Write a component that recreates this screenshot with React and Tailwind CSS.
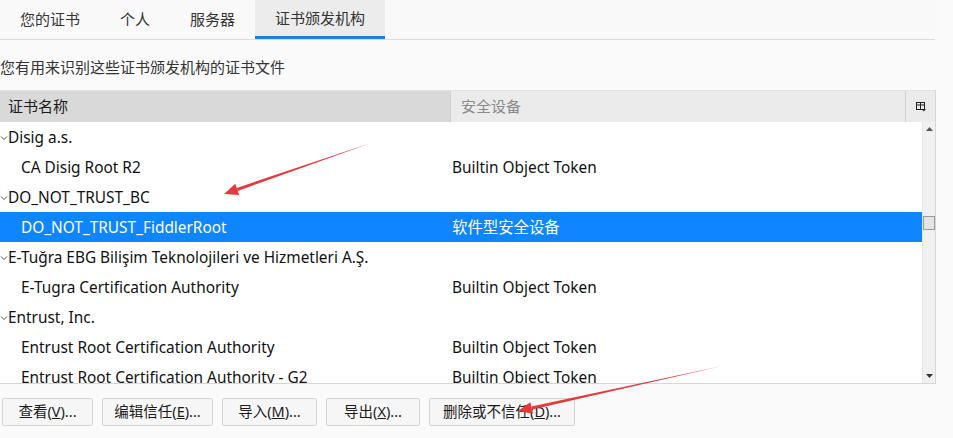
import React from 'react'

const FONT = { fontFamily: '"Noto Sans", "Noto Sans CJK SC", sans-serif' }

const rows = [
  { group: true, name: 'Disig a.s.' },
  { name: 'CA Disig Root R2', device: 'Builtin Object Token' },
  { group: true, name: 'DO_NOT_TRUST_BC' },
  { name: 'DO_NOT_TRUST_FiddlerRoot', device: '软件型安全设备', selected: true },
  { group: true, name: 'E-Tuğra EBG Bilişim Teknolojileri ve Hizmetleri A.Ş.' },
  { name: 'E-Tugra Certification Authority', device: 'Builtin Object Token' },
  { group: true, name: 'Entrust, Inc.' },
  { name: 'Entrust Root Certification Authority', device: 'Builtin Object Token' },
  { name: 'Entrust Root Certification Authority - G2', device: 'Builtin Object Token' },
]

function Chevron() {
  return (
    <svg width="8" height="8" viewBox="0 0 8 8" className="shrink-0">
      <path d="M1 2.5 L4 5.5 L7 2.5" fill="none" stroke="#555" strokeWidth="1" />
    </svg>
  )
}

function Row({ row }) {
  const sel = row.selected
  return (
    <div className={`flex h-[30px] items-center pt-[2px] text-[15.4px] ${sel ? 'bg-[#0f86ff] text-white' : 'text-[#111]'}`}>
      <div className="flex w-[452px] items-center whitespace-nowrap">
        {row.group ? (
          <>
            <Chevron />
            <span>{row.name}</span>
          </>
        ) : (
          <span className="pl-[21px]">{row.name}</span>
        )}
      </div>
      <div className="whitespace-nowrap">{row.device}</div>
    </div>
  )
}

function Button({ label, u, width }) {
  return (
    <button className={`h-[28px] ${width} rounded-[2px] border border-[#d4d4d4] bg-[#f6f6f6] text-[14.5px] text-[#1a1a1a]`}>
      {label}(<span className="underline">{u}</span>)...
    </button>
  )
}

function Arrow({ x1, y1, x2, y2 }) {
  const dx = x2 - x1
  const dy = y2 - y1
  const len = Math.hypot(dx, dy)
  const ux = dx / len
  const uy = dy / len
  const px = -uy
  const py = ux
  const head = 14
  const hw = 6
  const bx = x2 - ux * head
  const by = y2 - uy * head
  const shaft = `M${x1},${y1} L${bx + px * 1.6},${by + py * 1.6} L${bx - px * 1.6},${by - py * 1.6} Z`
  const tip = `M${x2},${y2} L${bx + px * hw},${by + py * hw} L${bx - px * hw},${by - py * hw} Z`
  return (
    <>
      <path d={shaft} fill="#e8383d" />
      <path d={tip} fill="#e8383d" />
    </>
  )
}

export default function App() {
  return (
    <div className="relative h-[438px] w-[953px] overflow-hidden bg-[#fafafa]" style={FONT}>
      {/* tabs */}
      <div className="flex h-[40px] w-[935px] border-b border-[#dcdcdc] bg-[#f9f9f9] text-[15px] text-[#333]">
        <div className="flex h-[39px] w-[100px] items-center justify-center">您的证书</div>
        <div className="flex h-[39px] w-[70px] items-center justify-center">个人</div>
        <div className="flex h-[39px] w-[85px] items-center justify-center">服务器</div>
        <div className="flex h-[39px] w-[130px] flex-col bg-[#ececec]">
          <div className="flex flex-1 items-center justify-center">证书颁发机构</div>
          <div className="h-[3px] bg-[#1a7fe0]" />
        </div>
      </div>

      <div className="flex h-[50px] items-center pt-[5px] text-[15px] text-[#333]">您有用来识别这些证书颁发机构的证书文件</div>

      {/* table */}
      <div className="w-[936px] border-r border-b border-[#d6d6d6] bg-white">
        <div className="flex h-[32px] items-center border-t border-[#e2e2e2] text-[15px]">
          <div className="flex h-full w-[450px] items-center bg-[#d9d9d9] pl-[8px] text-[#1a1a1a]">证书名称</div>
          <div className="flex h-full flex-1 items-center border-l border-[#cfcfcf] bg-[#ebebeb] pl-[10px] text-[#8a8a8a]">安全设备</div>
          <div className="flex h-full w-[30px] items-center justify-center border-l border-[#d0d0d0] bg-[#ebebeb]">
            <svg width="10" height="10" viewBox="0 0 10 10">
              <rect x="0.5" y="0.5" width="8" height="7" fill="none" stroke="#222" />
              <path d="M0.5 3 H8.5 M4.5 0.5 V7.5" stroke="#222" />
              <path d="M5.5 7 H10 L7.75 9.5 Z" fill="#222" />
            </svg>
          </div>
        </div>
        <div className="flex h-[261px]">
          <div className="flex-1 overflow-hidden">
            {rows.map((r, i) => (
              <Row key={i} row={r} />
            ))}
          </div>
          {/* scrollbar */}
          <div className="flex w-[13px] flex-col items-center border-l border-[#e6e6e6] bg-[#f0f0f0]">
            <div className="flex h-[14px] items-center">
              <svg width="7" height="4" viewBox="0 0 7 4"><path d="M0 4 L3.5 0 L7 4 Z" fill="#555" /></svg>
            </div>
            <div className="mt-[80px] h-[14px] w-[12px] border border-[#9a9a9a] bg-[#e4e4e4]" />
            <div className="flex-1" />
            <div className="flex h-[14px] items-center">
              <svg width="7" height="4" viewBox="0 0 7 4"><path d="M0 0 L3.5 4 L7 0 Z" fill="#333" /></svg>
            </div>
          </div>
        </div>
      </div>

      {/* buttons */}
      <div className="flex gap-[9px] pl-[2px] pt-[14px]">
        <Button label="查看" u="V" width="w-[91px]" />
        <Button label="编辑信任" u="E" width="w-[111px]" />
        <Button label="导入" u="M" width="w-[95px]" />
        <Button label="导出" u="X" width="w-[94px]" />
        <Button label="删除或不信任" u="D" width="w-[146px]" />
      </div>

      {/* annotations */}
      <svg className="pointer-events-none absolute left-0 top-0" width="953" height="438">
        <Arrow x1={371} y1={143} x2={224} y2={194} />
        <Arrow x1={722} y1={366} x2={518} y2={411} />
      </svg>
    </div>
  )
}
